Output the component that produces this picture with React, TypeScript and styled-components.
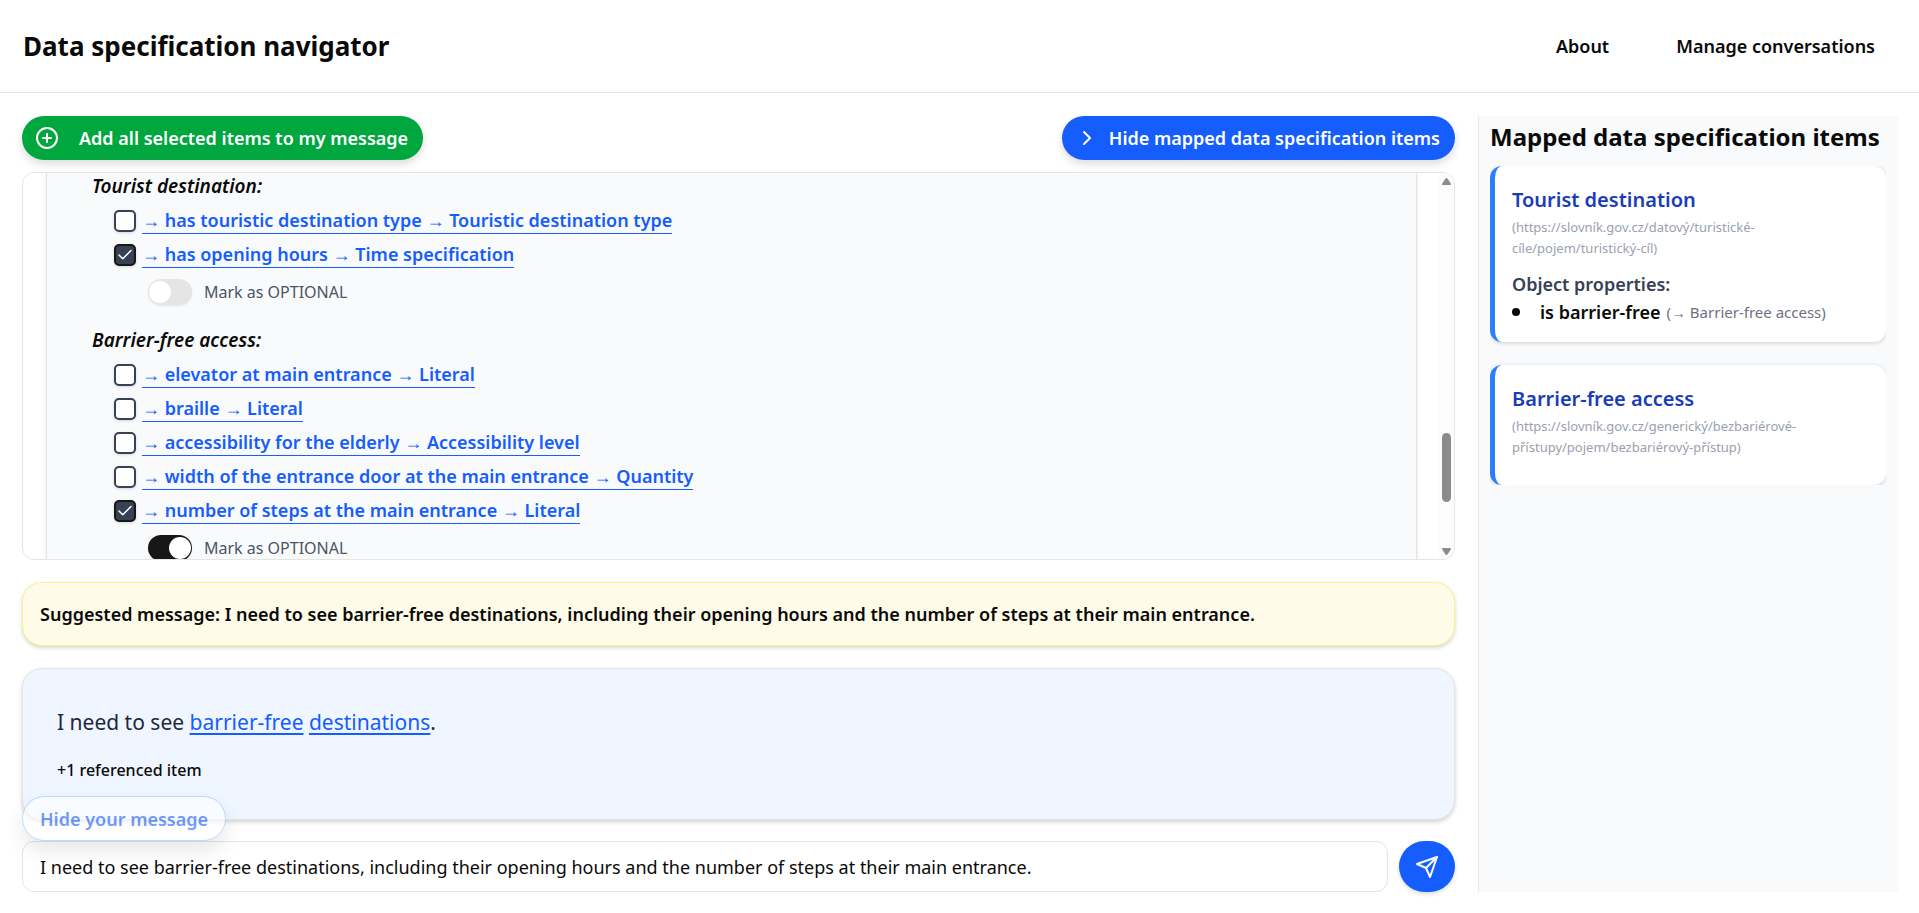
import React, { useState } from "react";
import styled, { createGlobalStyle } from "styled-components";
import { Check, ChevronRight, CirclePlus } from "lucide-react";

const GlobalStyle = createGlobalStyle`
  *, *::before, *::after { box-sizing: border-box; }
  body {
    margin: 0;
    background: #fff;
    color: #0a0a0a;
    font-family: "Noto Sans", "Open Sans", sans-serif;
    font-size: 18px;
    line-height: 28px;
  }
  h1, h2, h3, h4, p, ul { margin: 0; padding: 0; }
  button, input { font: inherit; color: inherit; }
`;

const Page = styled.div`
  display: flex;
  flex-direction: column;
  height: 100vh;
`;

const Header = styled.header`
  display: flex;
  align-items: center;
  justify-content: space-between;
  padding: 28px 44px 28px 23px;
  border-bottom: 1px solid #e5e5e5;
`;

const SiteTitle = styled.h1`
  font-size: 26px;
  line-height: 36px;
  font-weight: 700;
`;

const Nav = styled.nav`
  display: flex;
  gap: 67px;
`;

const NavLink = styled.a`
  color: inherit;
  font-weight: 600;
  text-decoration: none;
`;

const Main = styled.main`
  flex: 1;
  min-height: 0;
  display: flex;
  gap: 23px;
  padding: 23px 21px 21px 22px;
`;

const Conversation = styled.section`
  flex: 1;
  min-width: 0;
  display: flex;
  flex-direction: column;
`;

const Toolbar = styled.div`
  display: flex;
  justify-content: space-between;
  margin-bottom: 12px;
`;

const PillButton = styled.button<{ $color: string; $gap: number }>`
  display: flex;
  align-items: center;
  gap: ${(p) => p.$gap}px;
  height: 44px;
  padding: 0 15px 0 13px;
  border: 0;
  border-radius: 22px;
  background: ${(p) => p.$color};
  color: #fff;
  font-weight: 600;
  box-shadow: 0 4px 8px rgba(0, 0, 0, 0.14);
  cursor: pointer;
`;

const Panel = styled.div`
  flex: 1;
  min-height: 0;
  display: flex;
  border: 1px solid #e5e5e5;
  border-radius: 12px;
  overflow: hidden;
`;

const PanelScroll = styled.div`
  flex: 1;
  min-width: 0;
  overflow-y: auto;
  scrollbar-width: none;
  padding: 0 22px 0 23px;
`;

const Answer = styled.div`
  padding: 0 45px 22px;
  border: solid #e5e5e5;
  border-width: 0 1px;
  background: #f9fafb;
  box-shadow: 0 1px 3px rgba(0, 0, 0, 0.12);
`;

const Group = styled.section`
  & + & { margin-top: 15px; }
`;

const GroupTitle = styled.h3`
  margin-bottom: 5px;
  font-size: 19px;
  line-height: 26px;
  font-weight: 600;
  font-style: italic;
`;

const Item = styled.div`
  display: flex;
  align-items: center;
  gap: 6px;
  height: 34px;
  padding-left: 22px;
`;

const CheckWrap = styled.span`
  position: relative;
  display: flex;
  width: 22px;
  height: 22px;

  svg {
    position: absolute;
    inset: 2px;
    color: #fff;
    pointer-events: none;
  }
`;

const CheckInput = styled.input`
  appearance: none;
  width: 22px;
  height: 22px;
  margin: 0;
  border: 2px solid #364153;
  border-radius: 5px;
  background: #fff;
  box-shadow: 0 1px 3px rgba(0, 0, 0, 0.14);

  &:checked {
    border-color: #171717;
    background: #364153;
  }
`;

const ItemLink = styled.a`
  border-bottom: 1px solid #155dfc;
  color: #155dfc;
  line-height: 25px;
  font-weight: 600;
  text-decoration: none;
`;

const OptionalRow = styled.label`
  display: flex;
  align-items: center;
  gap: 12px;
  height: 40px;
  padding-left: 56px;
  color: #4a5565;
  font-size: 16px;
`;

const Switch = styled.input`
  appearance: none;
  display: flex;
  align-items: center;
  width: 44px;
  height: 26px;
  margin: 0;
  padding: 1px;
  border-radius: 13px;
  background: #e5e5e5;
  box-shadow: 0 1px 2px rgba(0, 0, 0, 0.08);

  &::before {
    content: "";
    width: 22px;
    height: 22px;
    border-radius: 50%;
    background: #fff;
  }

  &:checked {
    justify-content: flex-end;
    background: #171717;
  }
`;

const ScrollTrack = styled.div`
  display: flex;
  flex-direction: column;
  align-items: center;
  width: 15px;
  padding: 5px 0 4px;
  background: #fcfcfc;
`;

const ScrollThumb = styled.div`
  width: 9px;
  height: 69px;
  margin: auto 0 46px;
  border-radius: 5px;
  background: #8b8b8b;
`;

const Suggested = styled.p`
  margin-top: 22px;
  padding: 17px;
  border: 1px solid #fff085;
  border-radius: 20px;
  background: #fefce8;
  box-shadow: 0 2px 4px rgba(0, 0, 0, 0.16);
  font-weight: 600;
`;

const MessageCard = styled.div`
  position: relative;
  height: 152px;
  margin: 22px 0 21px;
  padding: 38px 34px;
  border: 1px solid #e5e5e5;
  border-radius: 20px;
  background: #eff6ff;
  box-shadow: 0 2px 4px rgba(0, 0, 0, 0.18);
`;

const MessageText = styled.p`
  color: #1e2939;
  font-size: 21px;
  line-height: 30px;
`;

const MessageLink = styled.a`
  color: #155dfc;
  text-decoration: underline;
  text-underline-offset: 3px;
`;

const References = styled.p`
  margin-top: 19px;
  font-size: 16px;
  line-height: 28px;
  font-weight: 500;
`;

const HideMessage = styled.button`
  position: absolute;
  left: -1px;
  bottom: -22px;
  height: 45px;
  padding: 0 17px;
  border: 1px solid #8ec5ff;
  border-radius: 23px;
  background: #fff;
  color: #155dfc;
  font-weight: 600;
  opacity: 0.6;
  box-shadow: 0 10px 18px rgba(0, 0, 0, 0.14);
  cursor: pointer;
`;

const Composer = styled.form`
  display: flex;
  gap: 11px;
`;

const MessageInput = styled.input`
  flex: 1;
  min-width: 0;
  height: 51px;
  padding: 0 17px;
  border: 1px solid #e5e5e5;
  border-radius: 12px;
  background: transparent;
  outline: none;
`;

const SendButton = styled.button`
  display: flex;
  align-items: center;
  justify-content: center;
  width: 56px;
  height: 51px;
  border: 0;
  border-radius: 26px;
  background: #155dfc;
  color: #fff;
  box-shadow: 0 2px 4px rgba(0, 0, 0, 0.14);
  cursor: pointer;
`;

const Aside = styled.aside`
  width: 420px;
  padding: 5px 12px 12px 11px;
  border-left: 1px solid #e5e7eb;
  background: #f9fafb;
`;

const AsideTitle = styled.h2`
  font-size: 24px;
  line-height: 32px;
  font-weight: 700;
  white-space: nowrap;
`;

const CardList = styled.div`
  display: flex;
  flex-direction: column;
  gap: 23px;
  margin-top: 13px;
  overflow: hidden;
`;

const Card = styled.article`
  padding: 18px 22px 16px 17px;
  border-left: 5px solid #2b7fff;
  border-radius: 12px;
  background: #fff;
  box-shadow: 0 1px 4px rgba(0, 0, 0, 0.18);
`;

const CardTitle = styled.h3`
  color: #193cb8;
  font-size: 20px;
  line-height: 32px;
  font-weight: 600;
`;

const CardIri = styled.p`
  margin: 1px 0 11px;
  color: #99a1af;
  font-size: 13px;
  line-height: 21px;
`;

const CardSubtitle = styled.h4`
  color: #364153;
  font-size: 18px;
  line-height: 28px;
  font-weight: 600;
`;

const Property = styled.li`
  display: flex;
  align-items: center;
  gap: 6px;
  line-height: 28px;
  font-weight: 600;
  white-space: nowrap;

  &::before {
    content: "";
    width: 8px;
    height: 8px;
    margin-right: 14px;
    border-radius: 50%;
    background: currentColor;
  }
`;

const PropertyTarget = styled.span`
  color: #6a7282;
  font-size: 15px;
  font-weight: 400;
`;

type Entry = { label: string; selected?: boolean; optional?: boolean };

const groups: { title: string; entries: Entry[] }[] = [
  {
    title: "Tourist destination:",
    entries: [
      { label: "→ has touristic destination type → Touristic destination type" },
      { label: "→ has opening hours → Time specification", selected: true },
    ],
  },
  {
    title: "Barrier-free access:",
    entries: [
      { label: "→ elevator at main entrance → Literal" },
      { label: "→ braille → Literal" },
      { label: "→ accessibility for the elderly → Accessibility level" },
      { label: "→ width of the entrance door at the main entrance → Quantity" },
      { label: "→ number of steps at the main entrance → Literal", selected: true, optional: true },
    ],
  },
];

function PlaneIcon() {
  return (
    <svg
      width="24"
      height="24"
      viewBox="0 0 24 24"
      fill="none"
      stroke="currentColor"
      strokeWidth="2"
      strokeLinecap="round"
      strokeLinejoin="round"
    >
      <path d="m22 2-7 20-4-9-9-4Z" />
      <path d="M22 2 11 13" />
    </svg>
  );
}

function EntryRow({ entry }: { entry: Entry }) {
  const [selected, setSelected] = useState(!!entry.selected);
  const [optional, setOptional] = useState(!!entry.optional);
  return (
    <>
      <Item>
        <CheckWrap>
          <CheckInput
            type="checkbox"
            aria-label={entry.label}
            checked={selected}
            onChange={(e) => setSelected(e.target.checked)}
          />
          {selected && <Check size={18} strokeWidth={2} />}
        </CheckWrap>
        <ItemLink href="#">{entry.label}</ItemLink>
      </Item>
      {selected && (
        <OptionalRow>
          <Switch
            type="checkbox"
            role="switch"
            checked={optional}
            onChange={(e) => setOptional(e.target.checked)}
          />
          Mark as OPTIONAL
        </OptionalRow>
      )}
    </>
  );
}

export default function App() {
  const [message, setMessage] = useState(
    "I need to see barrier-free destinations, including their opening hours and the number of steps at their main entrance."
  );
  return (
    <Page>
      <GlobalStyle />
      <Header>
        <SiteTitle>Data specification navigator</SiteTitle>
        <Nav>
          <NavLink href="#">About</NavLink>
          <NavLink href="#">Manage conversations</NavLink>
        </Nav>
      </Header>
      <Main>
        <Conversation>
          <Toolbar>
            <PillButton type="button" $color="#00a63e" $gap={20}>
              <CirclePlus size={24} strokeWidth={2} />
              Add all selected items to my message
            </PillButton>
            <PillButton type="button" $color="#155dfc" $gap={10}>
              <ChevronRight size={24} strokeWidth={2} />
              Hide mapped data specification items
            </PillButton>
          </Toolbar>
          <Panel>
            <PanelScroll>
              <Answer>
                {groups.map((group) => (
                  <Group key={group.title}>
                    <GroupTitle>{group.title}</GroupTitle>
                    {group.entries.map((entry) => (
                      <EntryRow key={entry.label} entry={entry} />
                    ))}
                  </Group>
                ))}
              </Answer>
            </PanelScroll>
            <ScrollTrack aria-hidden="true">
              <svg width="9" height="7" viewBox="0 0 9 7" fill="#8b8b8b">
                <path d="M3.6 .6Q4.5-.5 5.4.6L8.8 5.4Q9.3 7 8 7H1Q-.3 7 .2 5.4Z" />
              </svg>
              <ScrollThumb />
              <svg width="9" height="7" viewBox="0 0 9 7" fill="#8b8b8b">
                <path d="M3.6 6.4Q4.5 7.5 5.4 6.4L8.8 1.6Q9.3 0 8 0H1Q-.3 0 .2 1.6Z" />
              </svg>
            </ScrollTrack>
          </Panel>
          <Suggested>
            Suggested message: I need to see barrier-free destinations, including their opening hours and the number of
            steps at their main entrance.
          </Suggested>
          <MessageCard>
            <MessageText>
              I need to see <MessageLink href="#">barrier-free</MessageLink>{" "}
              <MessageLink href="#">destinations</MessageLink>.
            </MessageText>
            <References>+1 referenced item</References>
            <HideMessage type="button">Hide your message</HideMessage>
          </MessageCard>
          <Composer onSubmit={(e) => e.preventDefault()}>
            <MessageInput
              aria-label="Your message"
              value={message}
              onChange={(e) => setMessage(e.target.value)}
            />
            <SendButton type="submit" aria-label="Send">
              <PlaneIcon />
            </SendButton>
          </Composer>
        </Conversation>
        <Aside>
          <AsideTitle>Mapped data specification items</AsideTitle>
          <CardList>
            <Card>
              <CardTitle>Tourist destination</CardTitle>
              <CardIri>(https://slovník.gov.cz/datový/turistické-cíle/pojem/turistický-cíl)</CardIri>
              <CardSubtitle>Object properties:</CardSubtitle>
              <ul>
                <Property>
                  is barrier-free <PropertyTarget>(→ Barrier-free access)</PropertyTarget>
                </Property>
              </ul>
            </Card>
            <Card>
              <CardTitle>Barrier-free access</CardTitle>
              <CardIri>(https://slovník.gov.cz/generický/bezbariérové-přístupy/pojem/bezbariérový-přístup)</CardIri>
            </Card>
          </CardList>
        </Aside>
      </Main>
    </Page>
  );
}
